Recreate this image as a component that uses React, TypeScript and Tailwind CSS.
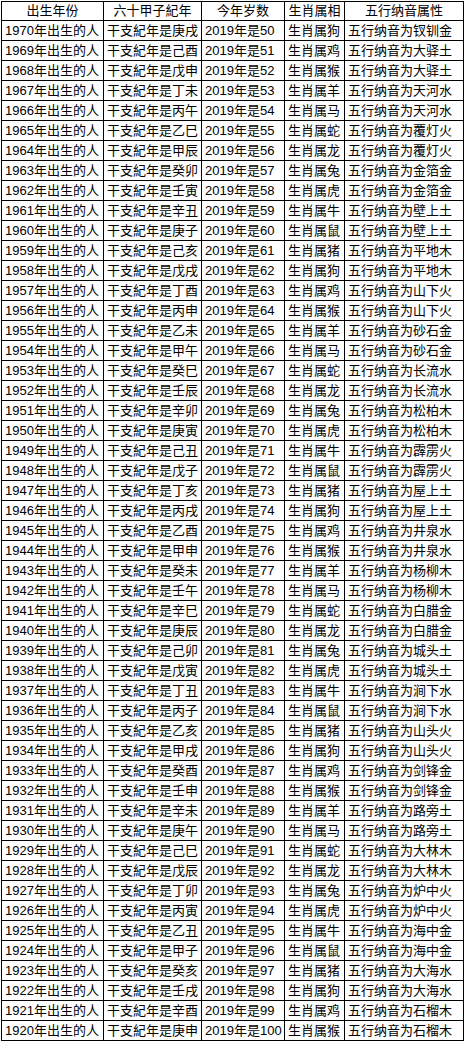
import React from "react";

const STEMS = "甲乙丙丁戊己庚辛壬癸";
const BRANCHES = "子丑寅卯辰巳午未申酉戌亥";
const ZODIAC = "鼠牛虎兔龙蛇马羊猴鸡狗猪";
const PAIRS = [
  "大驿土", "天河水", "覆灯火", "金箔金", "壁上土", "平地木", "山下火", "砂石金",
  "长流水", "松柏木", "霹雳火", "屋上土", "井泉水", "杨柳木", "白腊金", "城头土",
  "涧下水", "山头火", "剑锋金", "路旁土", "大林木", "炉中火", "海中金", "大海水", "石榴木",
];

type Row = { year: number; gz: string; age: number; zodiac: string; nayin: string };

const rows: Row[] = [];
for (let y = 1970; y >= 1920; y--) {
  const i = y - 4;
  const nayin = y === 1970 ? "钗钏金" : PAIRS[Math.floor((1969 - y) / 2)];
  rows.push({
    year: y,
    gz: STEMS[i % 10] + BRANCHES[i % 12],
    age: 2020 - y,
    zodiac: ZODIAC[i % 12],
    nayin,
  });
}

const cols = "grid grid-cols-[102px_98px_83px_60px_119px]";
const cell = "border-r border-b border-[#000] pl-[3px] whitespace-nowrap overflow-hidden";
const hcell = "border-r border-b border-[#000] text-center whitespace-nowrap overflow-hidden";

export default function App() {
  return (
    <div
      className="bg-white w-[466px] h-[1043px] pt-[1px] pl-[1px] text-[#000] text-[13px] leading-[19px]"
      style={{ fontFamily: '"Liberation Sans", "Noto Sans CJK SC", sans-serif' }}
    >
      <div className="w-[463px] border-l border-t border-[#000]">
        <div className={`${cols} h-[19px]`}>
          <div className={`${hcell} leading-[18px]`}>出生年份</div>
          <div className={`${hcell} leading-[18px]`}>六十甲子紀年</div>
          <div className={`${hcell} leading-[18px]`}>今年岁数</div>
          <div className={`${hcell} leading-[18px]`}>生肖属相</div>
          <div className={`${hcell} leading-[18px]`}>五行纳音属性</div>
        </div>
        {rows.map((r) => (
          <div key={r.year} className={`${cols} h-[20px]`}>
            <div className={cell}>{r.year}年出生的人</div>
            <div className={cell}>干支紀年是{r.gz}</div>
            <div className={cell}>2019年是{r.age}</div>
            <div className={cell}>生肖属{r.zodiac}</div>
            <div className={cell}>五行纳音为{r.nayin}</div>
          </div>
        ))}
      </div>
    </div>
  );
}
